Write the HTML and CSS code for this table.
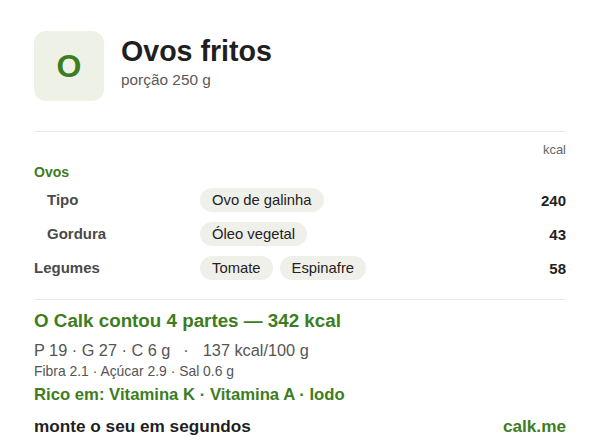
FILE: index.html
```html
<!DOCTYPE html>
<html lang="pt">
<head>
<meta charset="utf-8">
<link rel="stylesheet" href="styles.css">
</head>
<body>
<main class="card">
  <header class="head">
    <div class="avatar">O</div>
    <div class="titles">
      <h1 class="title">Ovos fritos</h1>
      <div class="portion">porção 250 g</div>
    </div>
  </header>
  <hr class="rule rule-top">
  <div class="unit">kcal</div>
  <div class="group">Ovos</div>
  <div class="rows">
    <div class="label sub">Tipo</div>
    <div class="pills"><span class="pill">Ovo de galinha</span></div>
    <div class="kcal">240</div>

    <div class="label sub">Gordura</div>
    <div class="pills"><span class="pill">Óleo vegetal</span></div>
    <div class="kcal">43</div>

    <div class="label">Legumes</div>
    <div class="pills"><span class="pill">Tomate</span><span class="pill">Espinafre</span></div>
    <div class="kcal">58</div>
  </div>
  <hr class="rule rule-bottom">
  <div class="total">O Calk contou 4 partes — 342 kcal</div>
  <div class="macros"><span>P 19 · G 27 · C 6 g</span><span class="sep">·</span><span>137 kcal/100 g</span></div>
  <div class="micros">Fibra 2.1 · Açúcar 2.9 · Sal 0.6 g</div>
  <div class="rich">Rico em: Vitamina K · Vitamina A · Iodo</div>
  <footer class="foot">
    <span class="cta">monte o seu em segundos</span>
    <span class="brand">calk.me</span>
  </footer>
</main>
</body>
</html>
```
FILE: styles.css
```css
* { box-sizing: border-box; }
html, body { margin: 0; background: #ffffff; }
body {
  font-family: "Liberation Sans", Arial, Helvetica, sans-serif;
  color: #1f1f1f;
}
.card {
  width: 600px;
  height: 448px;
  padding: 31px 34px 0 34px;
  overflow: hidden;
}
.head {
  display: flex;
  align-items: flex-start;
  gap: 17px;
}
.avatar {
  width: 70px;
  height: 70px;
  border-radius: 12px;
  background: #eef2e6;
  color: #3d7d22;
  font-weight: 700;
  font-size: 32px;
  display: flex;
  align-items: center;
  justify-content: center;
  flex: none;
}
.titles { padding-top: 3px; }
.title {
  margin: 0;
  font-size: 28.6px;
  line-height: 34px;
  font-weight: 700;
  color: #1f1f1f;
}
.portion {
  margin-top: 3px;
  font-size: 15.4px;
  line-height: 18px;
  color: #5a5a5a;
}
.rule {
  border: 0;
  height: 1px;
  margin: 0;
  background: #e8e8e4;
}
.rule-top { margin-top: 30px; }
.unit {
  margin-top: 11px;
  text-align: right;
  font-size: 13px;
  line-height: 14px;
  color: #666666;
}
.group {
  margin-top: 7px;
  font-size: 14px;
  line-height: 16px;
  font-weight: 700;
  color: #3d7d22;
}
.rows {
  margin-top: 8px;
  display: grid;
  grid-template-columns: 166px 1fr auto;
  row-gap: 10px;
  align-items: center;
}
.label {
  font-size: 15px;
  font-weight: 700;
  color: #4a4a4a;
  line-height: 24px;
}
.label.sub { padding-left: 13px; }
.pills { display: flex; gap: 7px; }
.pill {
  display: inline-block;
  height: 24px;
  line-height: 24px;
  padding: 0 12px;
  border-radius: 12px;
  background: #f0f0eb;
  font-size: 14.8px;
  color: #222222;
}
.kcal {
  font-size: 15px;
  font-weight: 700;
  color: #1f1f1f;
  text-align: right;
}
.rule-bottom { margin-top: 19px; }
.total {
  margin-top: 10px;
  font-size: 18.8px;
  line-height: 22px;
  font-weight: 700;
  color: #3d7d22;
}
.macros {
  margin-top: 8px;
  font-size: 16.3px;
  line-height: 20px;
  color: #555555;
}
.sep { margin: 0 14px 0 13px; }
.micros {
  margin-top: 3px;
  font-size: 13.9px;
  line-height: 16px;
  color: #555555;
}
.rich {
  margin-top: 6px;
  font-size: 16.7px;
  line-height: 20px;
  font-weight: 700;
  color: #3d7d22;
}
.foot {
  margin-top: 11px;
  display: flex;
  justify-content: space-between;
  font-size: 17.2px;
  line-height: 20px;
  font-weight: 700;
}
.cta { color: #1f1f1f; }
.brand { color: #3d7d22; }
```
